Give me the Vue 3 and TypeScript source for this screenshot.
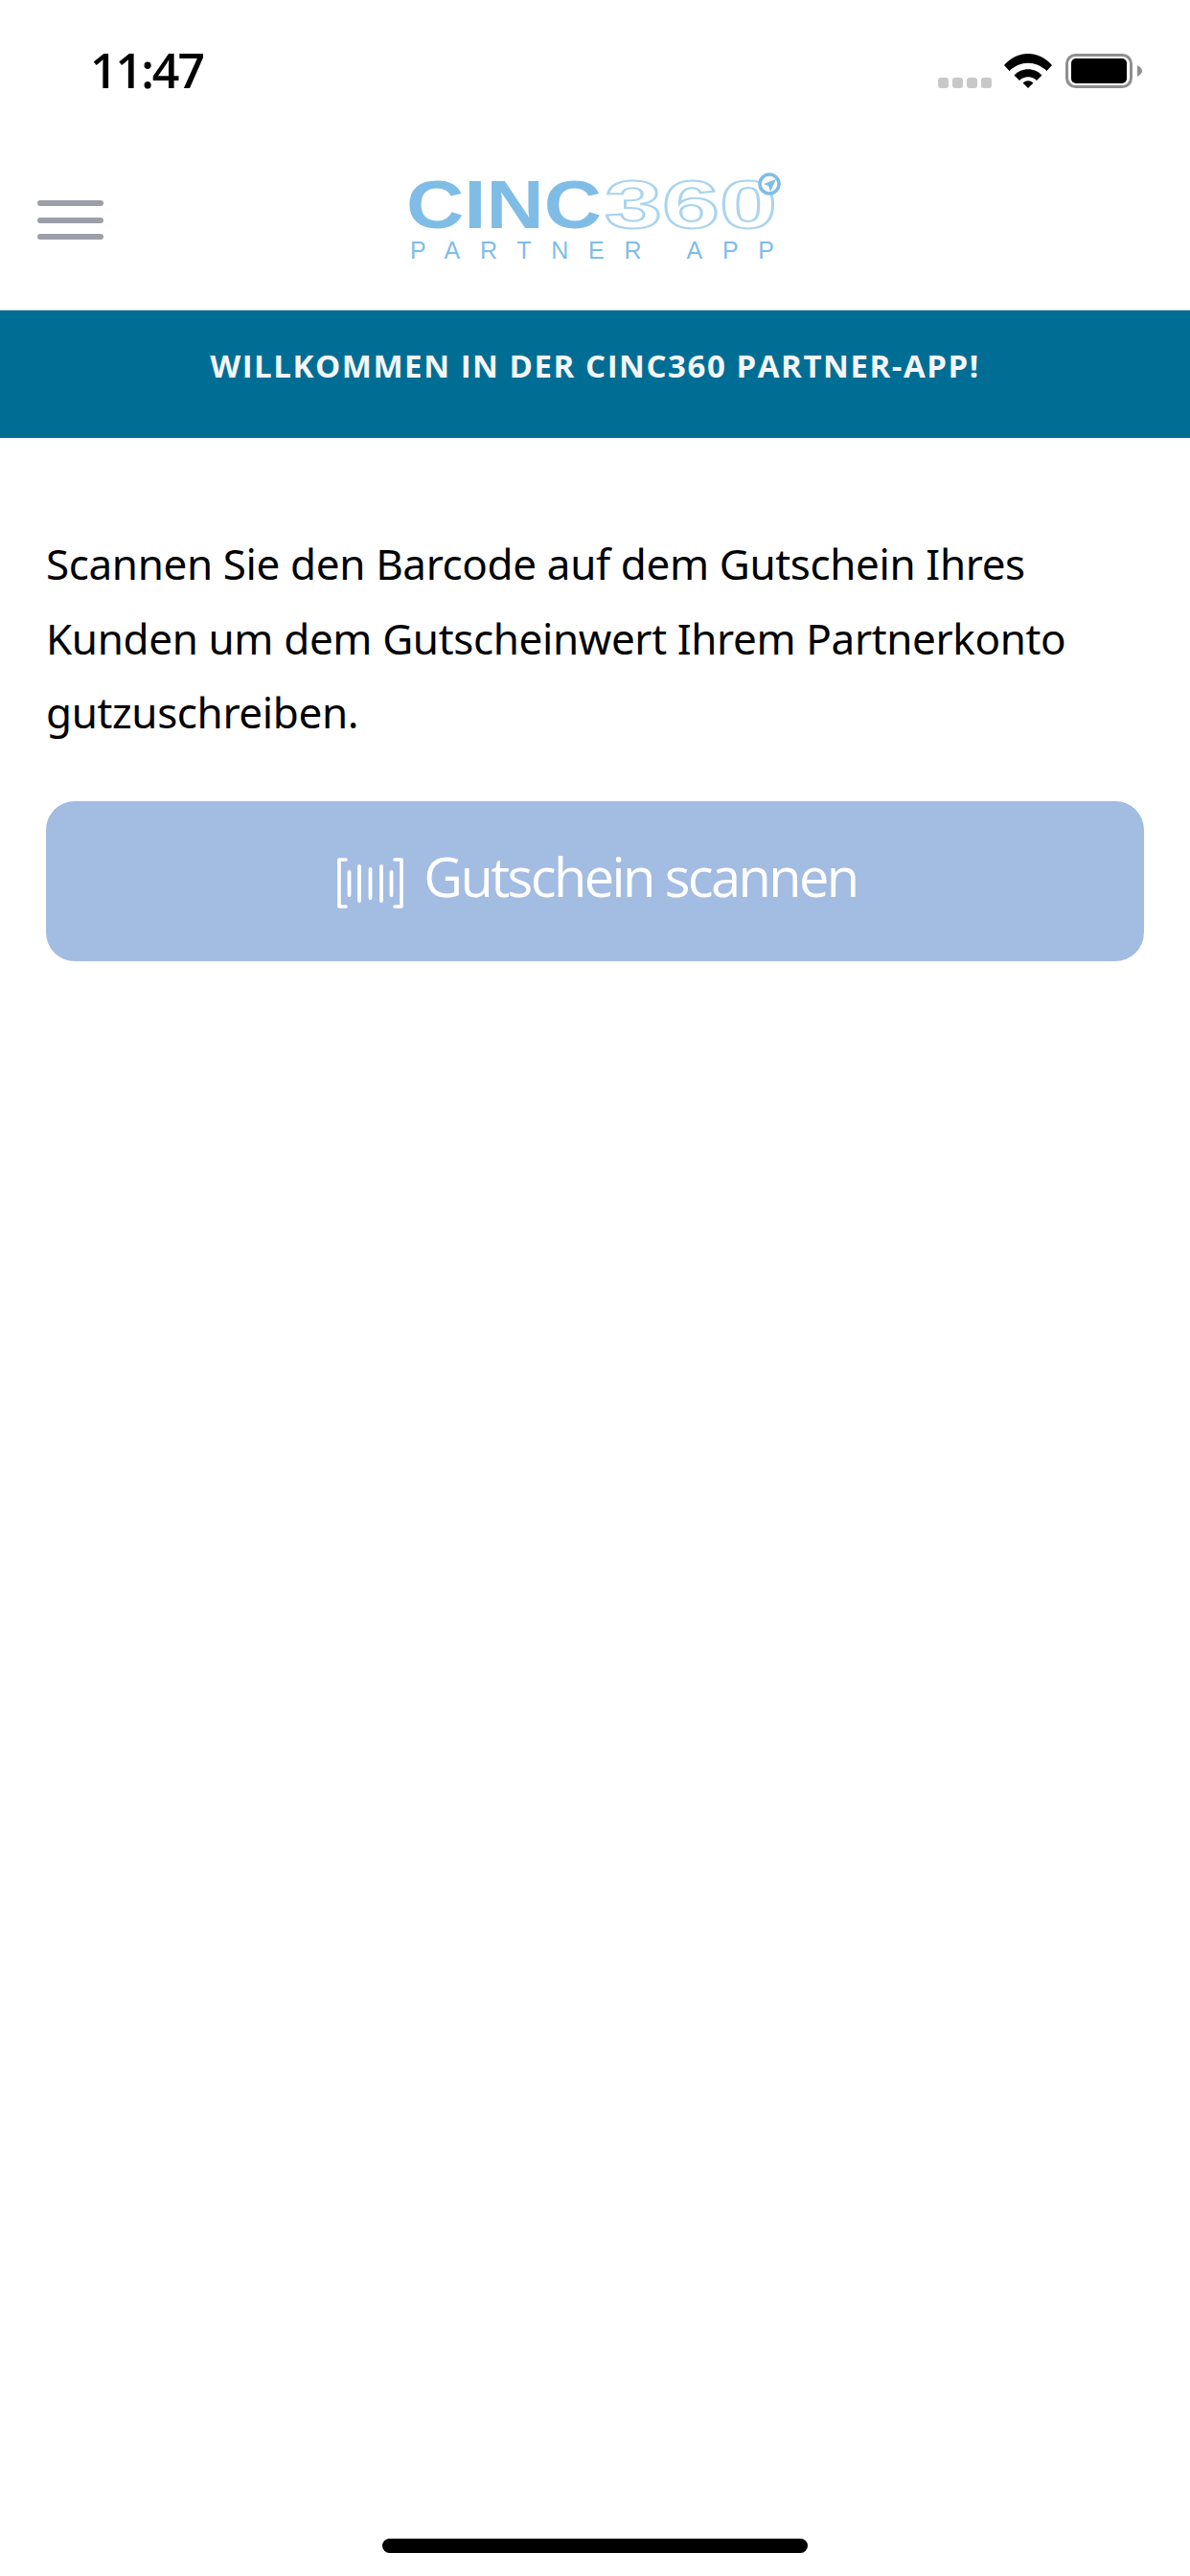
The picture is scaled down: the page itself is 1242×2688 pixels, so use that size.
<script setup lang="ts">
const lines: string[] = [
  'Scannen Sie den Barcode auf dem Gutschein Ihres',
  'Kunden um dem Gutscheinwert Ihrem Partnerkonto',
  'gutzuschreiben.',
]
const bars: { x: number; y1: number; y2: number }[] = [
  { x: 12.5, y1: 15, y2: 39 },
  { x: 23, y1: 9, y2: 45 },
  { x: 34.5, y1: 12, y2: 42 },
  { x: 46, y1: 9, y2: 45 },
  { x: 56.5, y1: 15, y2: 39 },
]
</script>

<template>
  <div class="screen">
    <header class="status">
      <span class="time">11:47</span>
      <div class="status-icons">
        <div class="signal"><i></i><i></i><i></i><i></i></div>
        <svg class="wifi" viewBox="0 0 50 36" width="50" height="36">
          <path d="M0 12 C14 -4 36 -4 50 12 L44.5 18 C33 7 17 7 5.5 18 Z" fill="#000" />
          <path d="M10.5 22.5 C18 14 32 14 39.5 22.5 L34 28 C29 23 21 23 16 28 Z" fill="#000" />
          <path d="M19.5 30.5 Q25 26 30.5 30.5 L25 36 Z" fill="#000" />
        </svg>
        <svg class="battery" viewBox="0 0 80 36" width="80" height="36">
          <rect x="1.5" y="1.5" width="67" height="33" rx="9" fill="none" stroke="#8e8e8e" stroke-width="3" />
          <rect x="6" y="5" width="58" height="26" rx="5" fill="#000" />
          <path d="M75 12 Q80 15 80 18 Q80 21 75 24 Z" fill="#8e8e8e" />
        </svg>
      </div>
    </header>

    <nav class="nav">
      <button class="menu" type="button" aria-label="Menü"><i></i><i></i><i></i></button>
      <svg class="logo" viewBox="0 0 390 96" width="390" height="96">
        <text class="logo-solid" x="-3" y="56" textLength="204" lengthAdjust="spacingAndGlyphs">CINC</text>
        <text class="logo-line" x="204" y="56" textLength="180" lengthAdjust="spacingAndGlyphs">360</text>
        <circle cx="376" cy="10" r="10" fill="#fff" stroke="#7fbde6" stroke-width="3.5" />
        <path d="M383 5 L370 10 L375 12 L377 18 Z" fill="#7fbde6" />
        <text class="logo-sub" x="1" y="88" textLength="380" lengthAdjust="spacing">PARTNER APP</text>
      </svg>
    </nav>

    <div class="banner">WILLKOMMEN IN DER CINC360 PARTNER-APP!</div>

    <main class="content">
      <p class="intro"><span v-for="line in lines" :key="line" class="line">{{ line }}</span></p>
      <button class="scan" type="button">
        <svg viewBox="0 0 69 53" width="69" height="53" class="barcode">
          <path d="M9 2 H2 V51 H9 M60 2 H67 V51 H60" fill="none" stroke="#fff" stroke-width="3.6" stroke-linecap="round" stroke-linejoin="round" />
          <line v-for="b in bars" :key="b.x" :x1="b.x" :x2="b.x" :y1="b.y1" :y2="b.y2" stroke="#fff" stroke-width="3.8" stroke-linecap="round" />
        </svg>
        <span class="scan-label">Gutschein scannen</span>
      </button>
    </main>

    <div class="home"><span></span></div>
  </div>
</template>

<style>
html, body { margin: 0; background: #fff; }
</style>

<style scoped>
.screen {
  width: 1242px;
  height: 2688px;
  display: flex;
  flex-direction: column;
  background: #fff;
  overflow: hidden;
  font-family: "Noto Sans", "Open Sans", sans-serif;
}
.status {
  height: 132px;
  flex: none;
  display: flex;
  justify-content: space-between;
  align-items: flex-start;
  padding: 0 50px 0 94px;
  box-sizing: border-box;
}
.time {
  margin-top: 38px;
  font: 600 50px/70px "Open Sans", sans-serif;
  letter-spacing: -2px;
  color: #000;
}
.status-icons {
  display: flex;
  align-items: flex-start;
  margin-top: 56px;
}
.signal { display: flex; gap: 4px; margin-top: 25px; margin-right: 13px; }
.signal i { width: 11px; height: 11px; border-radius: 3px; background: #c8c8c8; }
.wifi { margin-right: 14px; }
.nav {
  height: 191px;
  flex: none;
  display: flex;
  align-items: flex-start;
  box-sizing: border-box;
  padding: 50px 0 0 39px;
}
.menu {
  display: flex;
  flex-direction: column;
  gap: 11.5px;
  padding: 0;
  border: 0;
  background: none;
  margin-top: 27px;
}
.menu i { width: 69px; height: 6px; border-radius: 3px; background: #9d9fa8; }
.logo { margin-left: 319px; overflow: visible; }
.logo-solid { font: 700 71px "Liberation Sans", sans-serif; fill: #7fbde6; }
.logo-line { font: 700 71px "Liberation Sans", sans-serif; fill: #fff; stroke: #a9d4ef; stroke-width: 2; }
.logo-sub { font: 400 25px "Liberation Sans", sans-serif; fill: #7fbde6; }
.banner {
  height: 134px;
  flex: none;
  display: flex;
  align-items: center;
  justify-content: center;
  box-sizing: border-box;
  padding-bottom: 18px;
  border-top: 1px solid #c9d3d8;
  background: #006e94;
  color: #f4f6fa;
  font: 700 33px "Open Sans", sans-serif;
  letter-spacing: 1.55px;
}
.content {
  flex: 1;
  padding: 0 48px;
}
.intro {
  margin: 0;
  padding-top: 93px;
  font-size: 44px;
  line-height: 77.5px;
  letter-spacing: -0.37px;
  color: #000;
}
.line { display: block; }
.scan {
  margin-top: 53px;
  width: 100%;
  height: 167px;
  display: flex;
  align-items: center;
  justify-content: center;
  gap: 21px;
  padding: 0 0 0 5px;
  border: 0;
  border-radius: 30px;
  background: #a3bce2;
  color: #fff;
  font: 400 56px "Open Sans", sans-serif;
  letter-spacing: -2.6px;
}
.barcode { flex: none; margin-top: 4px; }
.scan-label { margin-top: -10px; }
.home {
  height: 39px;
  flex: none;
  display: flex;
  justify-content: center;
}
.home span { width: 444px; height: 15px; border-radius: 8px; background: #000; }
</style>
